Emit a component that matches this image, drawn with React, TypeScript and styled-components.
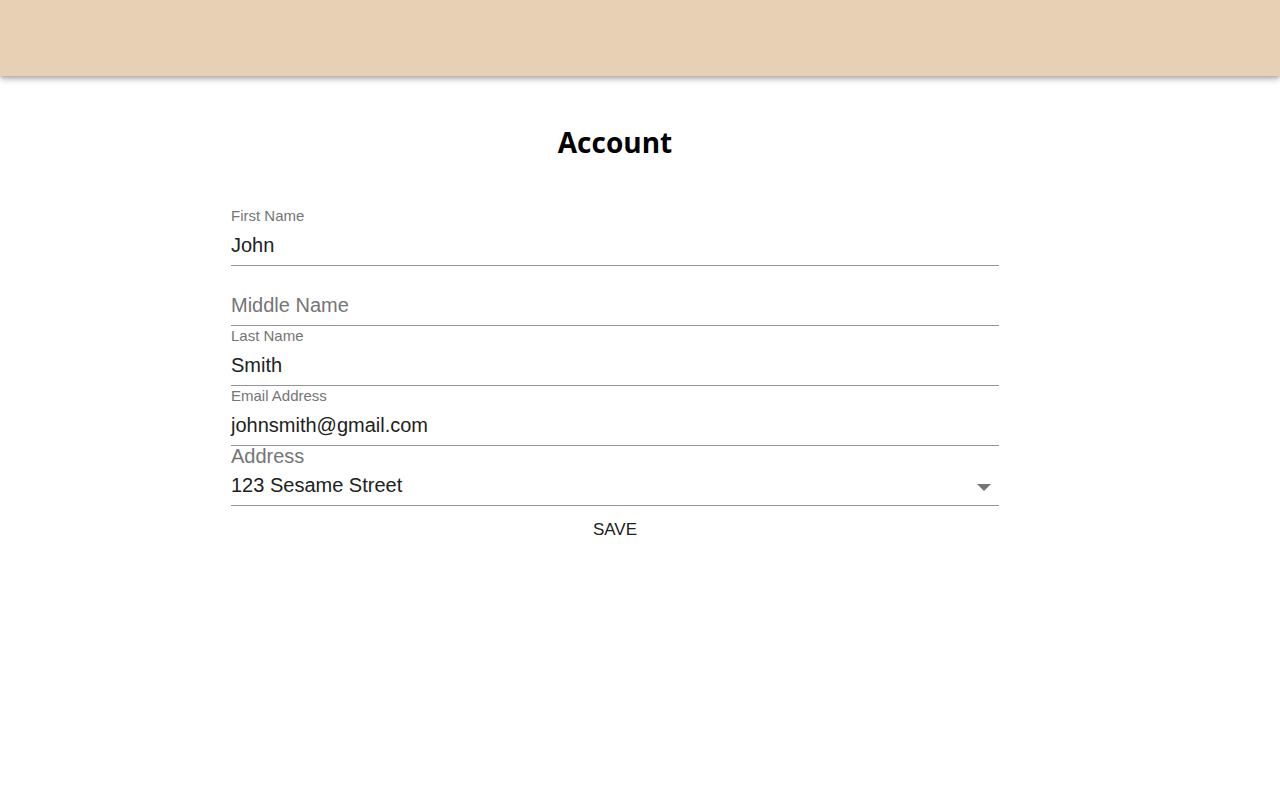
import React from 'react';
import styled, { createGlobalStyle } from 'styled-components';

const GlobalStyle = createGlobalStyle`
  html, body {
    margin: 0;
    padding: 0;
    background: #ffffff;
    font-family: "Liberation Sans", Arial, sans-serif;
  }
`;

const Page = styled.div`
  min-height: 800px;
  display: flex;
  flex-direction: column;
`;

const AppBar = styled.header`
  height: 76px;
  background: #e8d0b4;
  box-shadow: 0 2px 4px -1px rgba(0, 0, 0, 0.2), 0 4px 5px 0 rgba(0, 0, 0, 0.14),
    0 1px 10px 0 rgba(0, 0, 0, 0.12);
  flex-shrink: 0;
`;

const Main = styled.main`
  width: 768px;
  margin-left: 231px;
  display: flex;
  flex-direction: column;
`;

const Title = styled.h1`
  margin: 46px 0 44px;
  height: 40px;
  line-height: 40px;
  text-align: center;
  font-family: "Open Sans", "Noto Sans", sans-serif;
  font-weight: 700;
  font-size: 28px;
  color: #000;
`;

const Form = styled.form`
  display: flex;
  flex-direction: column;
`;

const Field = styled.div`
  height: 60px;
  box-sizing: border-box;
  border-bottom: 1px solid #949494;
  display: flex;
  flex-direction: column;
`;

const Label = styled.label<{ $shrink: boolean }>`
  height: 20px;
  line-height: 20px;
  font-size: ${({ $shrink }) => ($shrink ? '15px' : '20px')};
  color: #757575;
  white-space: nowrap;
`;

const Value = styled.div<{ $placeholder?: boolean }>`
  height: 39px;
  line-height: 39px;
  font-size: 20px;
  color: ${({ $placeholder }) => ($placeholder ? '#757575' : '#212121')};
  display: flex;
  align-items: center;
  justify-content: space-between;
`;

const Arrow = styled.svg`
  width: 14px;
  height: 7px;
  margin-right: 8px;
  margin-top: 3px;
  fill: #757575;
`;

const SaveButton = styled.button`
  align-self: center;
  border: none;
  background: none;
  padding: 12px 16px;
  line-height: 24px;
  font-family: "Liberation Sans", Arial, sans-serif;
  font-size: 17px;
  text-transform: uppercase;
  color: #212121;
  cursor: pointer;
`;

interface TextFieldProps {
  label: string;
  value?: string;
}

const TextField: React.FC<TextFieldProps> = ({ label, value }) => {
  if (!value) {
    return (
      <Field>
        <Label $shrink />
        <Value $placeholder>{label}</Value>
      </Field>
    );
  }
  return (
    <Field>
      <Label $shrink>{label}</Label>
      <Value>{value}</Value>
    </Field>
  );
};

const SelectField: React.FC<TextFieldProps> = ({ label, value }) => (
  <Field>
    <Label $shrink={false}>{label}</Label>
    <Value>
      <span>{value}</span>
      <Arrow viewBox="0 0 14 7">
        <path d="M0 0l7 7 7-7z" />
      </Arrow>
    </Value>
  </Field>
);

const App: React.FC = () => (
  <Page>
    <GlobalStyle />
    <AppBar />
    <Main>
      <Title>Account</Title>
      <Form onSubmit={(e) => e.preventDefault()}>
        <TextField label="First Name" value="John" />
        <TextField label="Middle Name" />
        <TextField label="Last Name" value="Smith" />
        <TextField label="Email Address" value="johnsmith@gmail.com" />
        <SelectField label="Address" value="123 Sesame Street" />
        <SaveButton type="submit">Save</SaveButton>
      </Form>
    </Main>
  </Page>
);

export default App;
